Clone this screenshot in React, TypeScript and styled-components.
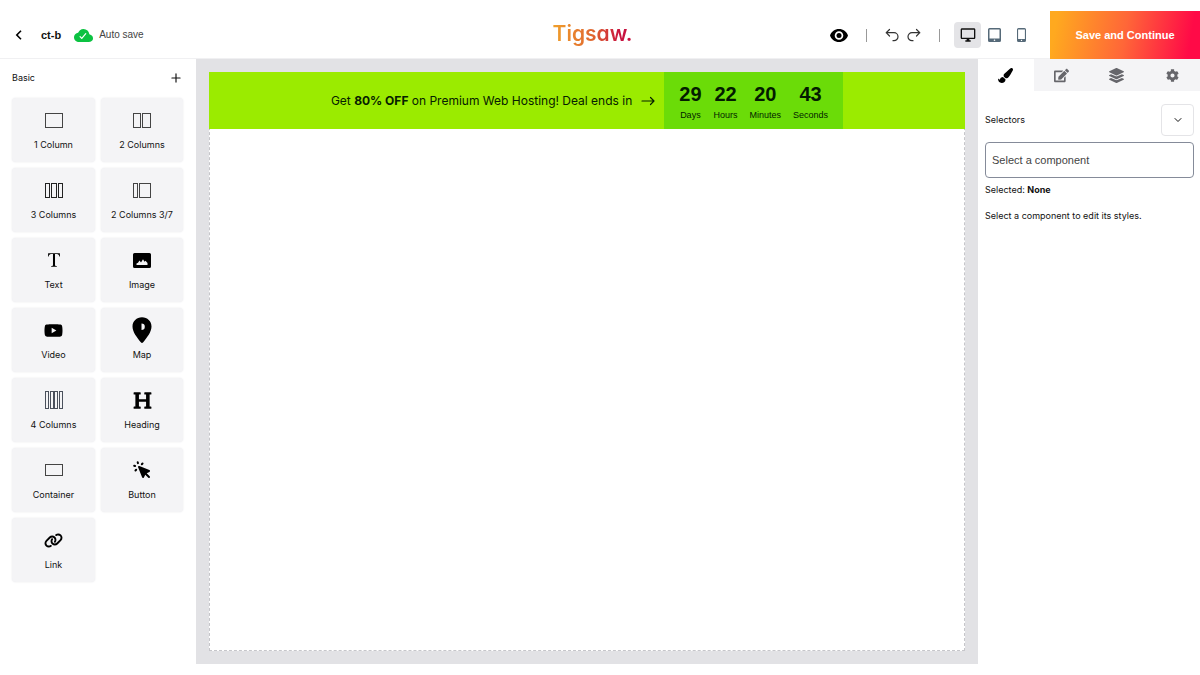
import React from 'react';
import styled, { createGlobalStyle } from 'styled-components';
import { FaPaintBrush, FaEdit, FaLayerGroup, FaCog, FaHeading, FaYoutube } from 'react-icons/fa';
import { FaLink } from 'react-icons/fa6';
import { BsFonts } from 'react-icons/bs';
import { HiCursorClick } from 'react-icons/hi';
import { IoCloudDone } from 'react-icons/io5';
import { MdOutlineDesktopWindows } from 'react-icons/md';
import { ChevronDown, Plus } from 'lucide-react';

const GlobalStyle = createGlobalStyle`
  * { box-sizing: border-box; }
  body {
    margin: 0;
    background: #fff;
    color: #111;
    font-family: Inter, "Liberation Sans", Arial, sans-serif;
    font-size: 9px;
    line-height: 12px;
  }
  button, input { font: inherit; color: inherit; }
  button { margin: 0; padding: 0; border: 0; background: none; cursor: pointer; }
  svg { display: block; flex: none; }
`;

const Page = styled.div`
  min-height: 100vh;
  padding: 11px 0;
  display: flex;
  flex-direction: column;
`;

const Header = styled.header`
  height: 48px;
  display: grid;
  grid-template-columns: 1fr auto 1fr;
  align-items: center;
  border-bottom: 1px solid #f0f0f2;
`;

const ProjectInfo = styled.div`
  display: flex;
  align-items: center;
  padding-left: 12px;
`;

const BackButton = styled.button`
  width: 14px;
  height: 24px;
  display: grid;
  place-items: center;
`;

const ProjectName = styled.strong`
  margin: 0 13px 0 15px;
  font-family: "Liberation Sans", Arial, sans-serif;
  font-size: 11px;
`;

const SaveState = styled.span`
  display: flex;
  align-items: center;
  gap: 6px;
  font-family: "Liberation Sans", Arial, sans-serif;
  font-size: 10px;
  color: #444;
  svg { color: #0cc242; }
`;

const Logo = styled.div`
  padding: 0 15px 2px 0;
  span {
    display: block;
    font: 600 21px/26px Inter, sans-serif;
    font-feature-settings: "cv11";
    background: linear-gradient(90deg, #f0a02c, #e0662f 50%, #c8123f 85%);
    background-clip: text;
    color: transparent;
  }
`;

const Tools = styled.div`
  display: flex;
  align-items: center;
  justify-content: flex-end;
  align-self: stretch;
`;

const ToolButton = styled.button<{ $active?: boolean }>`
  width: 27px;
  height: 26px;
  display: grid;
  place-items: center;
  border-radius: 4px;
  color: ${p => (p.$active ? '#111' : '#566a79')};
  background: ${p => (p.$active ? '#e4e4e7' : 'transparent')};
`;

const HistoryGroup = styled.div`
  display: flex;
  button { width: 22px; color: #333; }
`;

const Divider = styled.span`
  width: 1px;
  height: 13px;
  margin: 0 14px;
  background: #999;
`;

const SaveButton = styled.button`
  width: 150px;
  height: 48px;
  align-self: flex-start;
  margin-left: 15px;
  color: #fff;
  font-family: "Liberation Sans", Arial, sans-serif;
  font-size: 11px;
  font-weight: bold;
  background: linear-gradient(100deg, #ffa91f 5%, #ff6638 50%, #ff0a47 92%);
`;

const Workspace = styled.div`
  flex: 1;
  display: grid;
  grid-template-columns: 196px 1fr 222px;
`;

const Blocks = styled.aside`
  padding: 11px 13px 11px 12px;
`;

const BlocksHeader = styled.div`
  height: 16px;
  margin-bottom: 12px;
  display: flex;
  align-items: center;
  justify-content: space-between;
  h2 { margin: 0; font-size: 9px; font-weight: normal; }
`;

const BlockGrid = styled.div`
  display: grid;
  grid-template-columns: 83px 82px;
  gap: 6px;
`;

const BlockCard = styled.button`
  height: 64px;
  padding-bottom: 2px;
  display: flex;
  flex-direction: column;
  align-items: center;
  justify-content: center;
  gap: 6px;
  border-radius: 4px;
  background: #f4f4f6;
  box-shadow: 0 0 2px #e6e6e9;
`;

const BlockIcon = styled.span`
  height: 26px;
  display: grid;
  place-items: center;
  color: #000;
`;

const CanvasFrame = styled.main`
  display: flex;
  padding: 13px;
  background: #e2e2e5;
`;

const Canvas = styled.div`
  flex: 1;
  background: #fff;
  border: 1px dashed #c6c6ca;
  border-top: 0;
`;

const Banner = styled.section`
  height: 57px;
  margin: 0 -1px;
  display: flex;
  align-items: center;
  justify-content: center;
  background: #9beb00;
  color: #062000;
  p { margin: 0 9px 0 0; font-size: 12px; line-height: 16px; white-space: nowrap; }
`;

const Countdown = styled.div`
  align-self: stretch;
  margin-left: 9px;
  padding: 0 15px;
  display: flex;
  align-items: center;
  gap: 12px;
  background: #6bdc08;
  font-family: "Liberation Sans", Arial, sans-serif;
`;

const Unit = styled.div`
  display: flex;
  flex-direction: column;
  align-items: center;
  gap: 4px;
  padding-top: 2px;
  color: #031c00;
  strong { font-size: 20px; line-height: 22px; }
`;

const Inspector = styled.aside``;

const Tabs = styled.div`
  height: 32px;
  display: grid;
  grid-template-columns: repeat(4, 1fr);
`;

const Tab = styled.button<{ $active?: boolean }>`
  display: grid;
  place-items: center;
  color: ${p => (p.$active ? '#000' : '#66666b')};
  background: ${p => (p.$active ? '#fff' : '#f4f4f6')};
`;

const InspectorBody = styled.div`
  padding: 13px 6px 0 7px;
  p { margin: 0 0 14px; }
`;

const SelectorRow = styled.div`
  display: flex;
  align-items: center;
  justify-content: space-between;
  margin-bottom: 6px;
`;

const StateButton = styled.button`
  width: 33px;
  height: 32px;
  display: grid;
  place-items: center;
  border: 1px solid #e4e4e7;
  border-radius: 4px;
`;

const SelectorInput = styled.input`
  display: block;
  width: 100%;
  height: 36px;
  margin-bottom: 6px;
  padding: 0 6px;
  border: 1px solid #858b99;
  border-radius: 4px;
  background: #fff;
  font-family: "Liberation Sans", Arial, sans-serif;
  font-size: 11px;
  &::placeholder { color: #444; opacity: 1; }
`;

type Bar = [x: number, width: number];

function Bars({ bars, height = 15, color = '#444' }: { bars: Bar[]; height?: number; color?: string }) {
  return (
    <svg width="18" height={height} fill="none" stroke={color}>
      {bars.map(([x, w]) => (
        <rect key={x} x={x + 0.5} y="0.5" width={w - 1} height={height - 1} />
      ))}
    </svg>
  );
}

const ImageIcon = () => (
  <svg width="18" height="15" viewBox="0 0 18 15">
    <path fillRule="evenodd" fill="currentColor" d="M1.5 0h15A1.5 1.5 0 0 1 18 1.5v12a1.5 1.5 0 0 1-1.5 1.5h-15A1.5 1.5 0 0 1 0 13.5v-12A1.5 1.5 0 0 1 1.5 0ZM3.500 12h11V10L12.500 7.800l-1 1L10 6.300 8 9.500 6.500 7.500 5 9.800 3.500 10.500Z" />
  </svg>
);

const MapIcon = () => (
  <svg width="20" height="26" viewBox="0 0 20 26">
    <path fillRule="evenodd" fill="currentColor" d="M10 .3C4.600.3.500 4.300.500 9.500.500 15 5 20.500 8.800 25.200a1.500 1.500 0 0 0 2.400 0C15 20.500 19.500 15 19.500 9.500 19.500 4.300 15.400.3 10 .3Zm-.5 6.200a3.300 3.300 0 0 1 0 6.600Z" />
  </svg>
);

const EyeIcon = () => (
  <svg width="18" height="13" viewBox="0 0 18 13" fill="#000">
    <path fillRule="evenodd" d="M9 0C4.800 0 1.400 2.600 0 6.500 1.400 10.400 4.800 13 9 13s7.600-2.600 9-6.500C16.600 2.600 13.200 0 9 0Zm0 2.200a4.300 4.300 0 1 1 0 8.600 4.300 4.300 0 0 1 0-8.600Z" />
    <circle cx="9" cy="6.500" r="2.500" />
  </svg>
);

const UndoIcon = ({ mirrored = false }: { mirrored?: boolean }) => (
  <svg width="14" height="14" viewBox="0 0 14 14" fill="none" stroke="currentColor" strokeWidth="1.200" strokeLinecap="round" strokeLinejoin="round">
    <path
      d={
        mirrored
          ? 'M9.500 1.500 12.800 4.700 9.500 8M12.800 4.700H5a4 4 0 0 0 0 8h1'
          : 'M4.500 1.500 1.200 4.700 4.500 8M1.200 4.700H9a4 4 0 0 1 0 8H8'
      }
    />
  </svg>
);

const TabletIcon = () => (
  <svg width="13" height="14" viewBox="0 0 13 14">
    <path fillRule="evenodd" fill="currentColor" d="M1.500 0h10A1.500 1.500 0 0 1 13 1.500v11a1.500 1.500 0 0 1-1.500 1.500h-10A1.500 1.500 0 0 1 0 12.500v-11A1.500 1.500 0 0 1 1.500 0Zm0 1.500v9h10v-9ZM6.500 11.500a.8.8 0 1 0 0 1.600.8.8 0 0 0 0-1.600Z" />
  </svg>
);

const PhoneIcon = () => (
  <svg width="9" height="14" viewBox="0 0 9 14">
    <path fillRule="evenodd" fill="currentColor" d="M1.500 0h6A1.500 1.500 0 0 1 9 1.500v11A1.500 1.500 0 0 1 7.500 14h-6A1.500 1.500 0 0 1 0 12.500v-11A1.500 1.500 0 0 1 1.500 0Zm-.4 1.400v9.600h6.800v-9.600ZM4.500 11.700a.7.7 0 1 0 0 1.400.7.7 0 0 0 0-1.400Z" />
  </svg>
);

const BackIcon = () => (
  <svg width="8" height="10" viewBox="0 0 8 10" fill="none" stroke="#000" strokeWidth="1.600">
    <path d="M6 .8 1.800 5 6 9.200" />
  </svg>
);

const ArrowIcon = () => (
  <svg width="14" height="10" viewBox="0 0 14 10" fill="none" stroke="currentColor" strokeWidth="1.200" strokeLinecap="round" strokeLinejoin="round">
    <path d="M1 5h12M9.500 1.500 13 5 9.500 8.500" />
  </svg>
);

const blocks = [
  { label: '1 Column', icon: <Bars bars={[[0, 18]]} /> },
  { label: '2 Columns', icon: <Bars bars={[[0, 8], [9, 9]]} /> },
  { label: '3 Columns', icon: <Bars bars={[[0, 5], [6, 6], [13, 5]]} color="#222" /> },
  { label: '2 Columns 3/7', icon: <Bars bars={[[0, 5], [6, 12]]} /> },
  { label: 'Text', icon: <BsFonts size={22} /> },
  { label: 'Image', icon: <ImageIcon /> },
  { label: 'Video', icon: <FaYoutube size={19} /> },
  { label: 'Map', icon: <MapIcon /> },
  { label: '4 Columns', icon: <Bars bars={[[0, 4], [5, 4], [9, 4], [14, 4]]} height={18} color="#4a505c" /> },
  { label: 'Heading', icon: <FaHeading size={19} /> },
  { label: 'Container', icon: <Bars bars={[[0, 18]]} height={12} /> },
  { label: 'Button', icon: <HiCursorClick size={20} /> },
  { label: 'Link', icon: <FaLink size={19} /> },
];

const countdown = [
  ['29', 'Days'],
  ['22', 'Hours'],
  ['20', 'Minutes'],
  ['43', 'Seconds'],
];

const tabs = [
  { label: 'Styles', icon: <FaPaintBrush size={15} /> },
  { label: 'Edit', icon: <FaEdit size={15} /> },
  { label: 'Layers', icon: <FaLayerGroup size={15} /> },
  { label: 'Settings', icon: <FaCog size={13} /> },
];

export default function App() {
  return (
    <Page>
      <GlobalStyle />
      <Header>
        <ProjectInfo>
          <BackButton aria-label="Back"><BackIcon /></BackButton>
          <ProjectName>ct-b</ProjectName>
          <SaveState><IoCloudDone size={19} />Auto save</SaveState>
        </ProjectInfo>
        <Logo><span>Tigsaw.</span></Logo>
        <Tools>
          <ToolButton aria-label="Preview"><EyeIcon /></ToolButton>
          <Divider />
          <HistoryGroup>
            <ToolButton aria-label="Undo"><UndoIcon /></ToolButton>
            <ToolButton aria-label="Redo"><UndoIcon mirrored /></ToolButton>
          </HistoryGroup>
          <Divider />
          <ToolButton $active aria-label="Desktop"><MdOutlineDesktopWindows size={16} /></ToolButton>
          <ToolButton aria-label="Tablet"><TabletIcon /></ToolButton>
          <ToolButton aria-label="Mobile"><PhoneIcon /></ToolButton>
          <SaveButton>Save and Continue</SaveButton>
        </Tools>
      </Header>
      <Workspace>
        <Blocks>
          <BlocksHeader>
            <h2>Basic</h2>
            <button aria-label="Add block"><Plus size={14} strokeWidth={2} /></button>
          </BlocksHeader>
          <BlockGrid>
            {blocks.map(b => (
              <BlockCard key={b.label}>
                <BlockIcon>{b.icon}</BlockIcon>
                {b.label}
              </BlockCard>
            ))}
          </BlockGrid>
        </Blocks>
        <CanvasFrame>
          <Canvas>
            <Banner>
              <p>Get <b>80% OFF</b> on Premium Web Hosting! Deal ends in</p>
              <ArrowIcon />
              <Countdown>
                {countdown.map(([value, unit]) => (
                  <Unit key={unit}>
                    <strong>{value}</strong>
                    <span>{unit}</span>
                  </Unit>
                ))}
              </Countdown>
            </Banner>
          </Canvas>
        </CanvasFrame>
        <Inspector>
          <Tabs>
            {tabs.map((t, i) => (
              <Tab key={t.label} $active={i === 0} aria-label={t.label}>{t.icon}</Tab>
            ))}
          </Tabs>
          <InspectorBody>
            <SelectorRow>
              <label htmlFor="selector">Selectors</label>
              <StateButton aria-label="Choose state"><ChevronDown size={12} strokeWidth={2} /></StateButton>
            </SelectorRow>
            <SelectorInput id="selector" placeholder="Select a component" />
            <p>Selected: <b>None</b></p>
            <p>Select a component to edit its styles.</p>
          </InspectorBody>
        </Inspector>
      </Workspace>
    </Page>
  );
}
